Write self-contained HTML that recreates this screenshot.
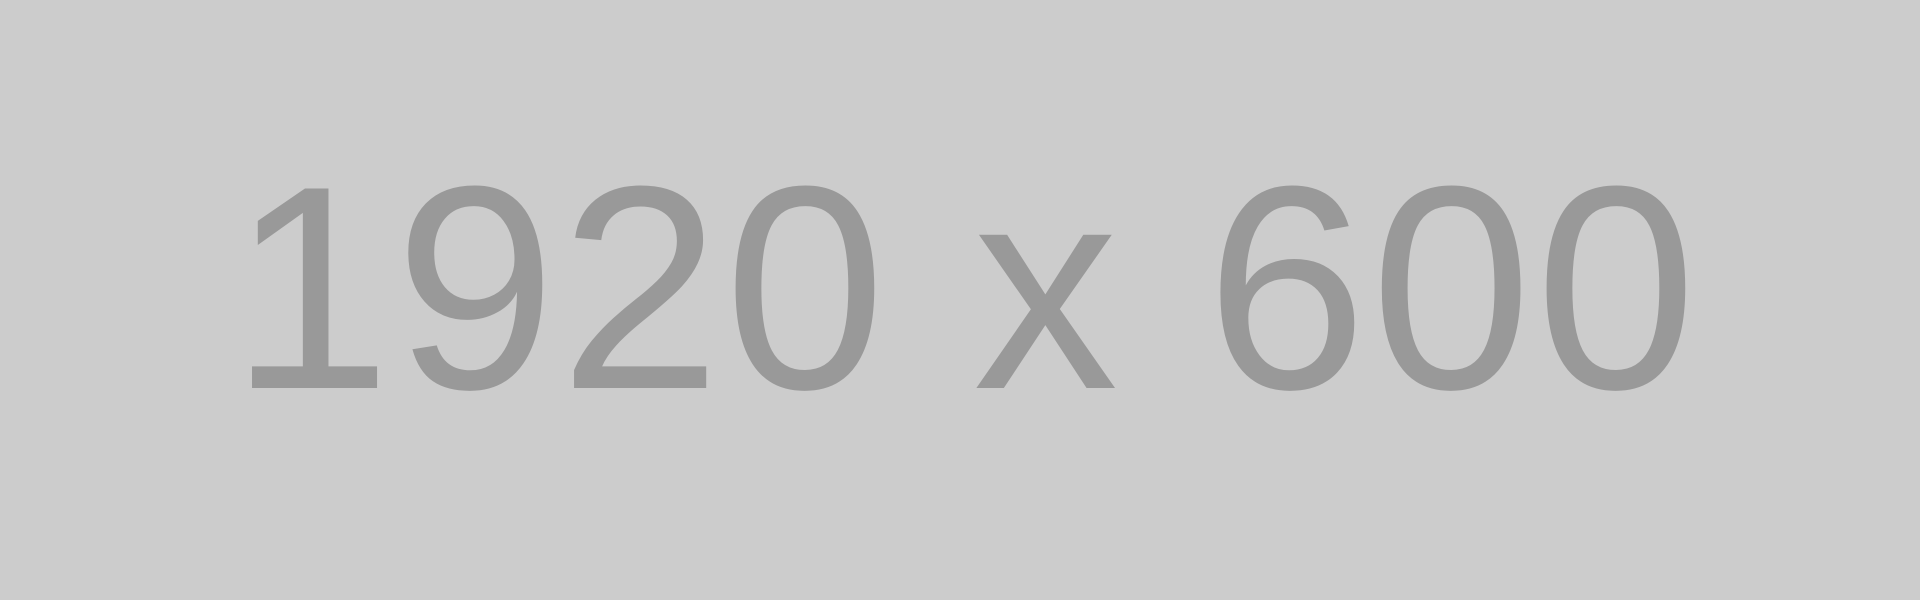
<!DOCTYPE html>
<html><head><style>html,body{margin:0;padding:0;width:1920px;height:600px;background:#cccccc;overflow:hidden}</style></head>
<body><svg width="1920" height="600" xmlns="http://www.w3.org/2000/svg"><rect width="1920" height="600" fill="#cccccc"/><text x="965" y="388" text-anchor="middle" font-family="Liberation Sans, Arial, sans-serif" font-size="290" letter-spacing="3.5" fill="#999999">1920 x 600</text></svg></body></html>
